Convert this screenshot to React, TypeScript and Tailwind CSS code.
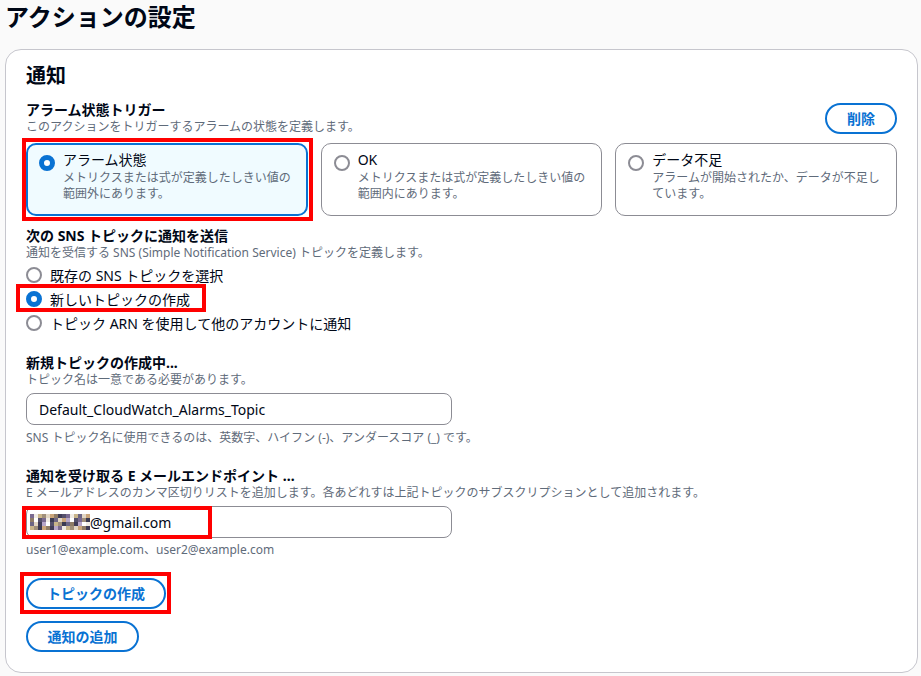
import React from 'react'

const font = { fontFamily: '"Noto Sans", "Noto Sans CJK JP", sans-serif' }

function Radio({ checked }: { checked?: boolean }) {
  return checked ? (
    <span className="inline-block w-[16px] h-[16px] rounded-full border-[5px] border-[#0972d3] bg-white shrink-0" />
  ) : (
    <span className="inline-block w-[16px] h-[16px] rounded-full border-2 border-[#8c8c94] bg-white shrink-0" />
  )
}

function Tile({ label, desc, checked }: { label: string; desc: string; checked?: boolean }) {
  return (
    <div
      className={
        'flex gap-[8px] rounded-[10px] h-[73px] ' +
        (checked ? 'border-2 border-[#0972d3] bg-[#f0fbff] px-[11px] pt-[5px]' : 'border border-[#8c8c94] bg-white px-[12px] pt-[6px]')
      }
    >
      <div className="pt-[3px]">
        <Radio checked={checked} />
      </div>
      <div>
        <div className="text-[14px] leading-[20px] text-[#000716]">{label}</div>
        <div className="text-[12px] leading-[16px] text-[#5f6b7a]">{desc}</div>
      </div>
    </div>
  )
}

function Mosaic() {
  const cols = ['#7a6a90', '#c9b58a', '#3a3a52', '#e2d6c4', '#8f7c66', '#b8a7c9', '#55506b', '#f1ece4', '#a08f7a', '#6d6684', '#caa57a', '#403c57', '#ffffff']
  return (
    <span className="inline-grid grid-cols-[repeat(15,4px)] grid-rows-[repeat(4,4px)] align-middle">
      {Array.from({ length: 60 }).map((_, i) => (
        <span key={i} style={{ background: cols[(i * 7 + (i >> 2)) % cols.length] }} />
      ))}
    </span>
  )
}

export default function App() {
  return (
    <div className="min-h-[676px] bg-[#fafafa] pl-[5px] pr-[3px] text-[#000716]" style={font}>
      <h1 className="text-[24px] leading-[34px] font-bold pb-[15px]">アクションの設定</h1>
      <div className="bg-white border border-[#c6c6cd] rounded-[16px] px-[20px] pt-[12px] pb-[20px]">
        <h2 className="text-[20px] leading-[28px] font-bold">通知</h2>

        <div className="mt-[11px] flex justify-between items-start">
          <div>
            <div className="text-[14px] leading-[18px] font-bold">アラーム状態トリガー</div>
            <div className="text-[12px] leading-[16px] text-[#5f6b7a]">このアクションをトリガーするアラームの状態を定義します。</div>
          </div>
          <button className="mt-[2px] w-[72px] h-[31px] rounded-full border-2 border-[#0972d3] text-[#0972d3] text-[14px] font-bold">
            削除
          </button>
        </div>

        <div className="mt-[8px] grid grid-cols-3 gap-[13px]">
          <div className="relative">
            <div className="absolute -left-[4px] -top-[5px] -right-[5px] -bottom-[5px] border-[4px] border-[#ff0000]" />
            <Tile checked label="アラーム状態" desc="メトリクスまたは式が定義したしきい値の範囲外にあります。" />
          </div>
          <Tile label="OK" desc="メトリクスまたは式が定義したしきい値の範囲内にあります。" />
          <Tile label="データ不足" desc="アラームが開始されたか、データが不足しています。" />
        </div>

        <div className="mt-[11px] text-[14px] leading-[18px] font-bold">次の SNS トピックに通知を送信</div>
        <div className="text-[12px] leading-[16px] text-[#5f6b7a]">通知を受信する SNS (Simple Notification Service) トピックを定義します。</div>
        <div className="mt-[2px] flex flex-col">
          <label className="flex items-center gap-[8px] h-[24px] text-[14px]">
            <Radio />
            既存の SNS トピックを選択
          </label>
          <label className="relative flex items-center gap-[8px] h-[24px] text-[14px]">
            <span className="absolute left-[-10px] top-[-3px] w-[190px] h-[28px] border-[4px] border-[#ff0000]" />
            <Radio checked />
            新しいトピックの作成
          </label>
          <label className="flex items-center gap-[8px] h-[24px] text-[14px]">
            <Radio />
            トピック ARN を使用して他のアカウントに通知
          </label>
        </div>

        <div className="mt-[19px] text-[14px] leading-[18px] font-bold">新規トピックの作成中...</div>
        <div className="text-[12px] leading-[16px] text-[#5f6b7a]">トピック名は一意である必要があります。</div>
        <div className="mt-[5px] w-[426px] h-[32px] border border-[#8c8c94] rounded-[8px] flex items-center px-[12px] text-[14px]">
          Default_CloudWatch_Alarms_Topic
        </div>
        <div className="mt-[5px] text-[12px] leading-[16px] text-[#5f6b7a]">SNS トピック名に使用できるのは、英数字、ハイフン (-)、アンダースコア (_) です。</div>

        <div className="mt-[21px] text-[14px] leading-[18px] font-bold">通知を受け取る E メールエンドポイント ...</div>
        <div className="text-[12px] leading-[16px] text-[#5f6b7a]">E メールアドレスのカンマ区切りリストを追加します。各あどれすは上記トピックのサブスクリプションとして追加されます。</div>
        <div className="relative mt-[5px] w-[426px] h-[32px] border border-[#8c8c94] rounded-[8px] flex items-center px-[3px] text-[14px]">
          <span className="absolute left-[-5px] top-[-1px] w-[190px] h-[33px] border-[4px] border-[#ff0000]" />
          <Mosaic />
          @gmail.com
        </div>
        <div className="mt-[4px] text-[12px] leading-[16px] text-[#5f6b7a]">user1@example.com、user2@example.com</div>

        <div className="relative mt-[20px] w-fit">
          <span className="absolute left-[-6px] top-[-6px] right-[-5px] bottom-[-5px] border-[4px] border-[#ff0000]" />
          <button className="h-[31px] w-[140px] whitespace-nowrap rounded-full border-2 border-[#0972d3] text-[#0972d3] text-[14px] font-bold bg-white">
            トピックの作成
          </button>
        </div>
        <div className="mt-[12px]">
          <button className="h-[31px] w-[113px] whitespace-nowrap rounded-full border-2 border-[#0972d3] text-[#0972d3] text-[14px] font-bold bg-white">
            通知の追加
          </button>
        </div>
      </div>
    </div>
  )
}
